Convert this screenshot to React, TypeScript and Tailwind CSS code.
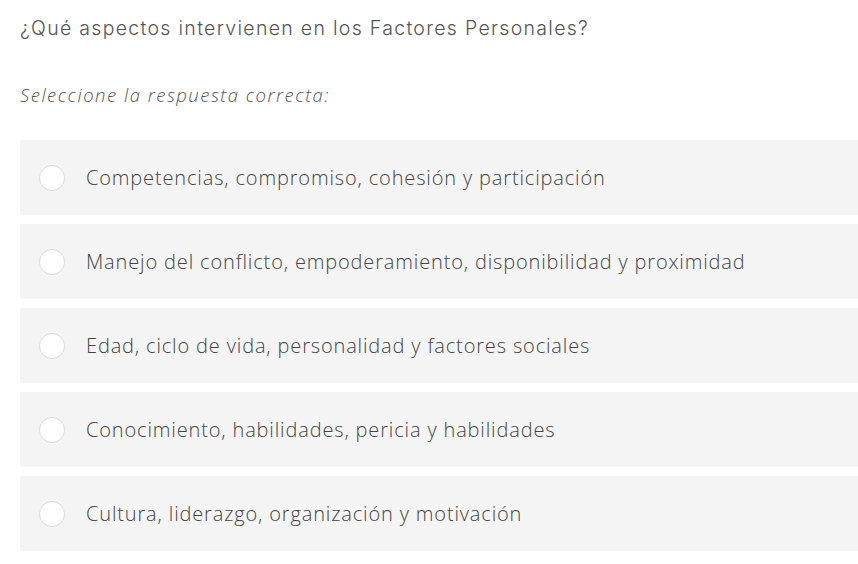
import React from "react";

const options = [
  "Competencias, compromiso, cohesión y participación",
  "Manejo del conflicto, empoderamiento, disponibilidad y proximidad",
  "Edad, ciclo de vida, personalidad y factores sociales",
  "Conocimiento, habilidades, pericia y habilidades",
  "Cultura, liderazgo, organización y motivación",
];

export default function App() {
  return (
    <div className="w-[858px] h-[564px] bg-white overflow-hidden pl-5 pt-[14px]">
      <p className="text-[19.5px] leading-7 text-[#555] font-light font-['Inter',sans-serif] tracking-[1.3px] whitespace-nowrap">
        ¿Qué aspectos intervienen en los Factores Personales?
      </p>
      <p className="mt-[39px] text-[18.5px] leading-7 text-[#555] font-light italic font-['Open_Sans',sans-serif] tracking-[1.5px] whitespace-nowrap">
        Seleccione la respuesta correcta:
      </p>
      <div className="mt-[31px] flex flex-col gap-[9px] w-[860px]">
        {options.map((o) => (
          <div
            key={o}
            className="h-[75px] bg-[#f4f4f4] rounded-[3px] flex items-center pl-[19px]"
          >
            <span className="w-[26px] h-[26px] rounded-full bg-white border border-[#dcdcdc] shrink-0" />
            <span className="ml-[21px] text-[20px] text-[#444] font-light font-['Open_Sans',sans-serif] whitespace-nowrap tracking-[0.85px]">
              {o}
            </span>
          </div>
        ))}
      </div>
    </div>
  );
}
